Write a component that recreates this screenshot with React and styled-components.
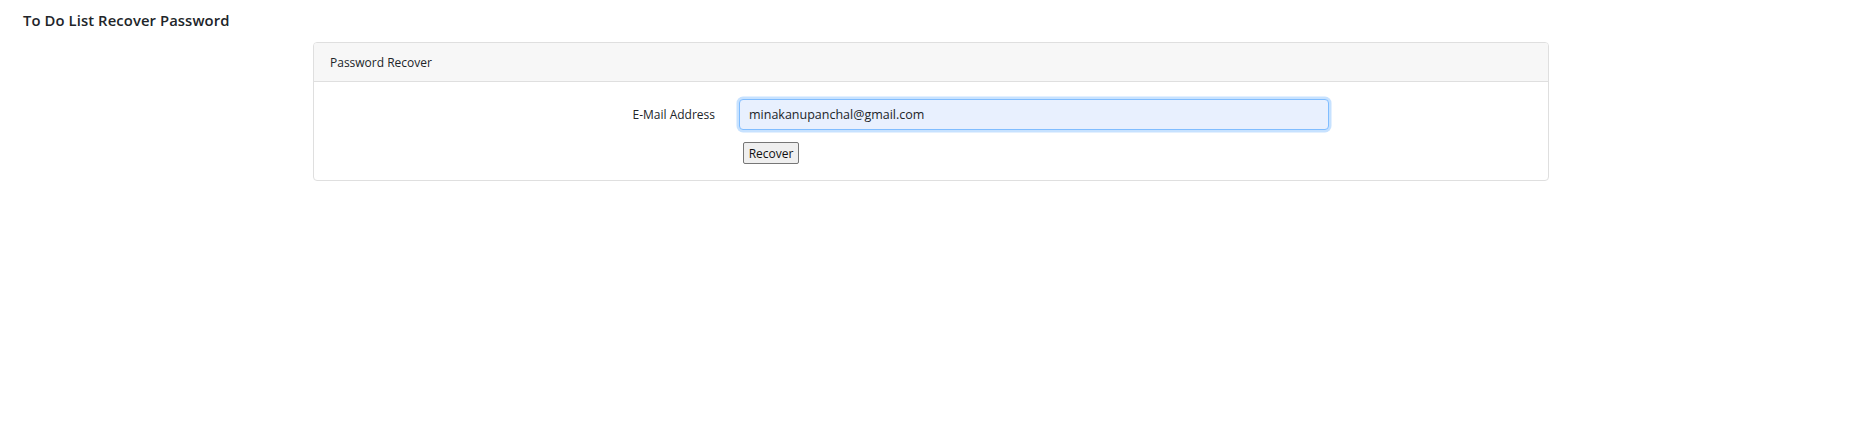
import React from "react";
import styled, { createGlobalStyle } from "styled-components";

const Global = createGlobalStyle`
  html, body { margin: 0; padding: 0; background: #fff; }
  body {
    font-family: "Open Sans", "Noto Sans", "Liberation Sans", sans-serif;
    color: #212529;
  }
`;

const Page = styled.div`
  display: flex;
  flex-direction: column;
  width: 1862px;
`;

const TopBar = styled.header`
  display: flex;
  align-items: center;
  height: 40px;
  padding: 0 0 0 23px;
  box-sizing: border-box;
`;

const Brand = styled.h1`
  margin: 0;
  font-size: 14.8px;
  font-weight: 600;
  color: #212529;
  letter-spacing: 0.1px;
`;

const Wrap = styled.main`
  display: flex;
  justify-content: center;
  padding-top: 2px;
`;

const Card = styled.section`
  width: 1236px;
  border: 1px solid #dfdfdf;
  border-radius: 4px;
  box-sizing: border-box;
  display: flex;
  flex-direction: column;
  overflow: hidden;
`;

const CardHeader = styled.div`
  height: 39px;
  box-sizing: border-box;
  display: flex;
  align-items: center;
  padding: 0 16px;
  background: #f7f7f7;
  border-bottom: 1px solid #dfdfdf;
  font-size: 12px;
  color: #212529;
`;

const CardBody = styled.form`
  display: flex;
  flex-direction: column;
  gap: 12px;
  padding: 17px 18px 16px;
`;

const Row = styled.div`
  display: grid;
  grid-template-columns: 407px 1fr;
  margin: 0 -15px;
  align-items: center;
`;

const Label = styled.label`
  padding: 0 9px 0 15px;
  text-align: right;
  font-size: 12px;
  color: #212529;
`;

const Field = styled.div`
  padding: 0 15px;
  width: 620px;
  box-sizing: border-box;
  display: flex;
`;

const Input = styled.input`
  width: 100%;
  height: 31px;
  box-sizing: border-box;
  padding: 0 9px;
  font-family: inherit;
  font-size: 12.5px;
  color: #212529;
  background: #e8f0fe;
  border: 1px solid #80bdff;
  border-radius: 4px;
  box-shadow: 0 0 0 2.5px rgba(0, 123, 255, 0.22);
  outline: none;
`;

const Button = styled.button`
  margin-left: 4px;
  width: 56px;
  height: 22px;
  padding: 0;
  font-family: inherit;
  font-size: 12px;
  color: #111;
  background: #efefef;
  border: 1px solid #767676;
  border-radius: 2px;
`;

export default function App() {
  return (
    <>
      <Global />
      <Page>
        <TopBar>
          <Brand>To Do List Recover Password</Brand>
        </TopBar>
        <Wrap>
          <Card>
            <CardHeader>Password Recover</CardHeader>
            <CardBody onSubmit={(e) => e.preventDefault()}>
              <Row>
                <Label htmlFor="email">E-Mail Address</Label>
                <Field>
                  <Input id="email" type="email" defaultValue="minakanupanchal@gmail.com" />
                </Field>
              </Row>
              <Row>
                <span />
                <Field>
                  <Button type="submit">Recover</Button>
                </Field>
              </Row>
            </CardBody>
          </Card>
        </Wrap>
      </Page>
    </>
  );
}
